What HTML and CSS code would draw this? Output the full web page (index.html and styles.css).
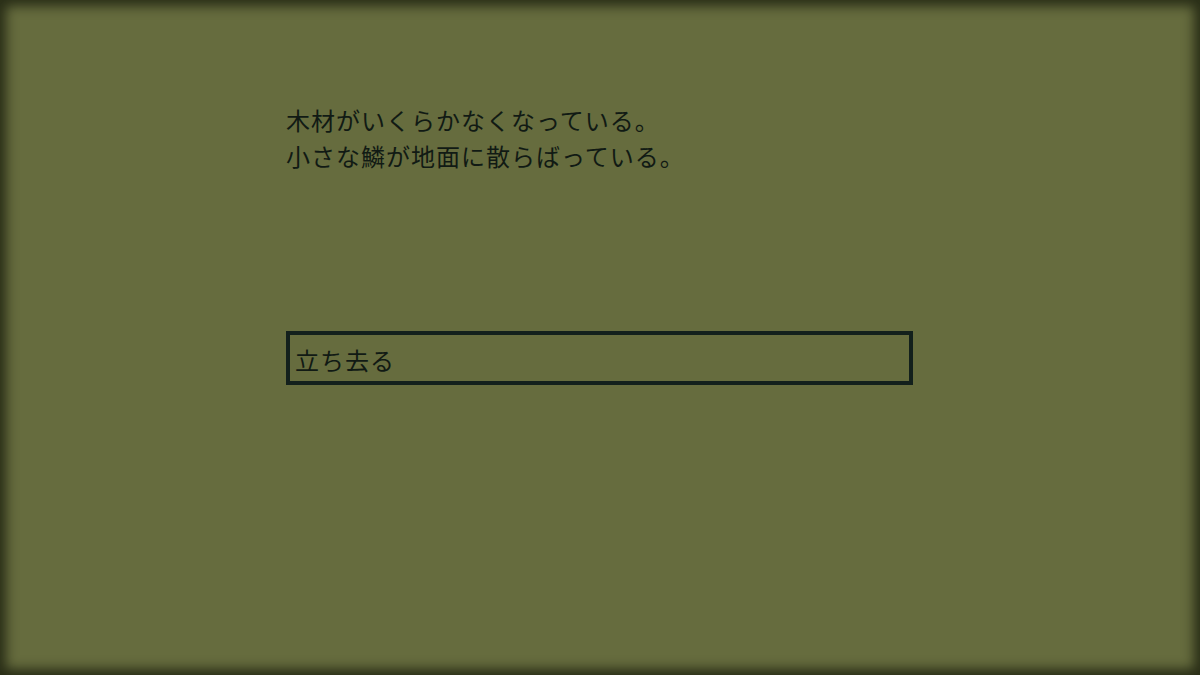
FILE: index.html
```html
<!DOCTYPE html>
<html lang="ja">
<head>
    <meta charset="UTF-8">
    <title>探索</title>
    <link rel="stylesheet" href="styles.css">
</head>
<body>
    <div class="screen">
        <div class="story">
            <p class="message">木材がいくらかなくなっている。<br>小さな鱗が地面に散らばっている。</p>
            <div class="choices">
                <button class="choice">立ち去る</button>
            </div>
        </div>
    </div>
</body>
</html>
```

FILE: styles.css
```css
html, body {
    margin: 0;
    height: 100%;
}
body {
    background-color: #666c3e;
    font-family: "Noto Sans CJK JP", "DejaVu Sans", sans-serif;
    color: #111a14;
}
.screen {
    height: 100%;
    box-sizing: border-box;
    box-shadow: inset 0 0 12px 6px rgba(20, 24, 10, 0.75);
    padding: 102px 0 0 286px;
}
.story {
    width: 627px;
}
.message {
    margin: 0;
    font-size: 24px;
    letter-spacing: 1px;
    line-height: 36px;
}
.choices {
    margin-top: 157px;
}
.choice {
    display: block;
    width: 100%;
    height: 54px;
    box-sizing: border-box;
    background: none;
    border: 4px solid #13201c;
    padding: 2px 5px 0;
    text-align: left;
    font-family: inherit;
    font-size: 24px;
    letter-spacing: 1px;
    color: #111a14;
    cursor: pointer;
}
```
